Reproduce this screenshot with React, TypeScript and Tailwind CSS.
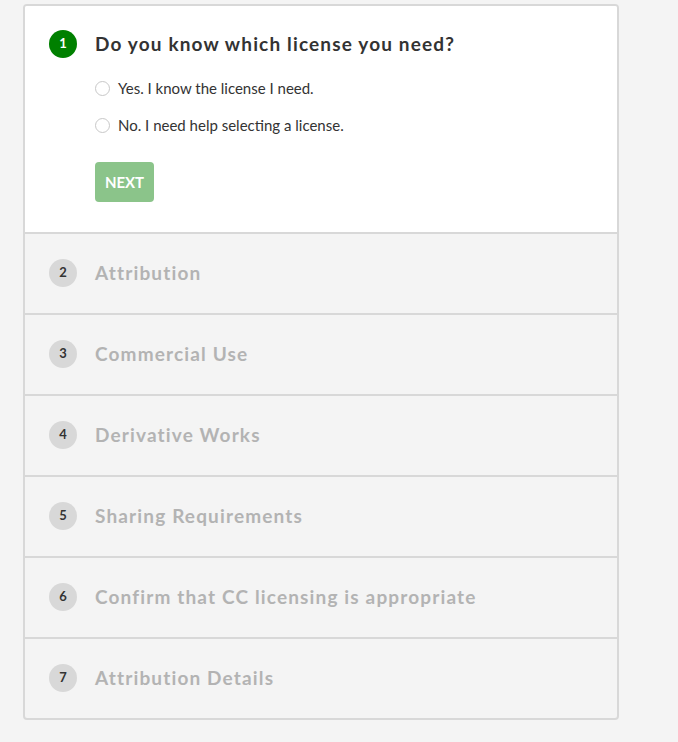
import React from "react";

const steps = [
  "Attribution",
  "Commercial Use",
  "Derivative Works",
  "Sharing Requirements",
  "Confirm that CC licensing is appropriate",
  "Attribution Details",
];

export default function App() {
  return (
    <div
      className="min-h-[742px] w-[678px] bg-[#f4f4f4] pl-[23px] pt-[4px]"
      style={{ fontFamily: "Lato, 'Liberation Sans', sans-serif" }}
    >
      <div className="w-[596px] overflow-hidden rounded-[4px] border-2 border-[#d8d8d8] bg-[#f4f4f4]">
        <div className="bg-white px-6 pt-[24px] pb-[30px]">
          <div className="flex items-center gap-[18px]">
            <div className="flex h-[28px] w-[28px] items-center justify-center rounded-full bg-[#008000] text-[13px] font-bold text-white">
              1
            </div>
            <div className="text-[19px] font-bold leading-[28px] tracking-[1.15px] text-[#333333]">
              Do you know which license you need?
            </div>
          </div>
          <div className="ml-[46px] mt-[22px] flex flex-col gap-[21px]">
            <label className="flex h-[16px] items-center gap-[8px] text-[15px] text-[#333333]">
              <span className="h-[15px] w-[15px] rounded-full border border-[#c8c8c8] bg-white" />
              Yes. I know the license I need.
            </label>
            <label className="flex h-[16px] items-center gap-[8px] text-[15px] text-[#333333]">
              <span className="h-[15px] w-[15px] rounded-full border border-[#c8c8c8] bg-white" />
              No. I need help selecting a license.
            </label>
          </div>
          <button className="ml-[46px] mt-[29px] flex h-[40px] w-[59px] items-center justify-center rounded-[4px] bg-[#8bc48a] text-[15px] font-bold text-white">
            NEXT
          </button>
        </div>
        {steps.map((s, i) => (
          <div
            key={s}
            className="flex h-[81px] items-center gap-[18px] border-t-2 border-[#d8d8d8] px-6 pb-[2px]"
          >
            <div className="flex h-[28px] w-[28px] items-center justify-center rounded-full bg-[#d8d8d8] text-[13px] font-bold text-[#333333]">
              {i + 2}
            </div>
            <div className="text-[19px] font-bold leading-[28px] tracking-[1.15px] text-[#b3b3b3]">
              {s}
            </div>
          </div>
        ))}
      </div>
    </div>
  );
}
